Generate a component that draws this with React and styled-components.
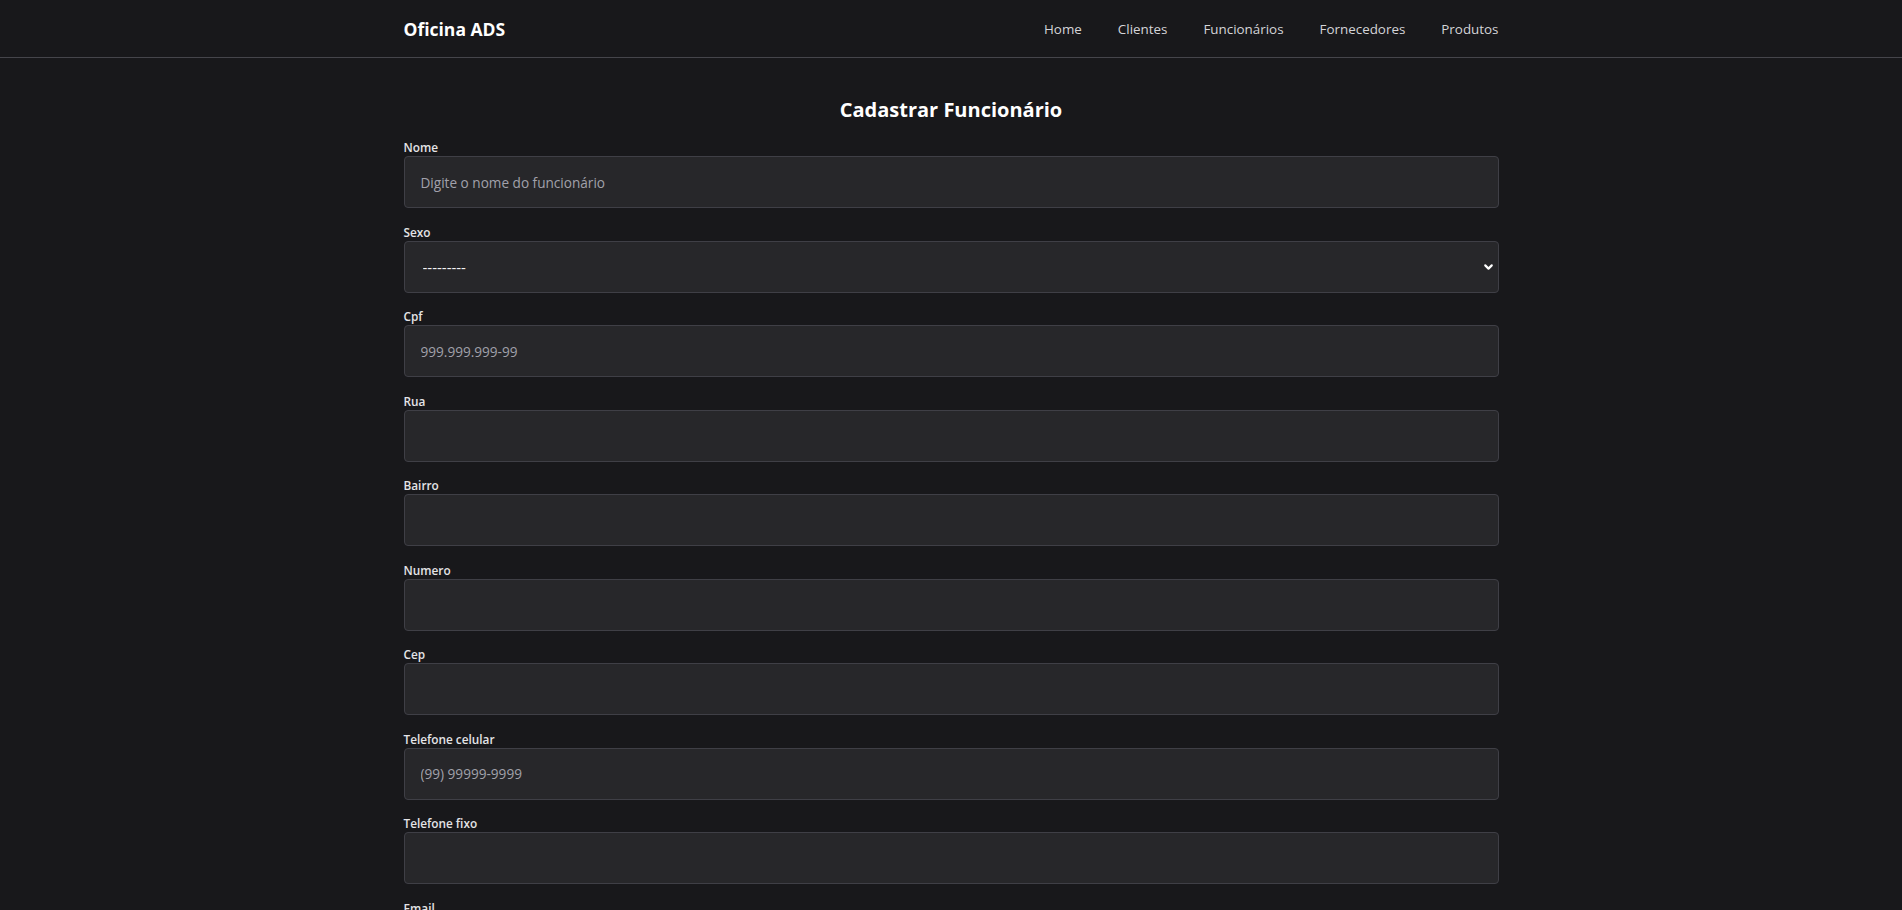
import React from 'react'
import styled, { createGlobalStyle } from 'styled-components'
import { ChevronDown } from 'lucide-react'

const GlobalStyle = createGlobalStyle`
    body {
        margin: 0;
        background: #18181b;
        color: #e4e4e7;
        font-family: "Open Sans", "Noto Sans", sans-serif;
    }
    * {
        box-sizing: border-box;
    }
`

const Header = styled.header`
    height: 58px;
    border-bottom: 1px solid #45454b;
    background: #18181b;
`

const Bar = styled.div`
    width: 1095px;
    height: 100%;
    margin: 0 auto;
    display: flex;
    align-items: center;
    justify-content: space-between;
`

const Logo = styled.a`
    color: #ffffff;
    font-size: 17.5px;
    font-weight: 700;
    text-decoration: none;
`

const Nav = styled.nav`
    display: flex;
    gap: 36px;
`

const NavLink = styled.a`
    color: #d4d4d8;
    font-size: 13.4px;
    text-decoration: none;
`

const Main = styled.main`
    width: 1095px;
    margin: 0 auto;
    padding: 38px 0 40px;
`

const Title = styled.h1`
    margin: 0 0 14px;
    text-align: center;
    color: #ffffff;
    font-size: 20px;
    line-height: 28px;
    font-weight: 700;
`

const Field = styled.div`
    margin-bottom: 14.5px;
`

const Label = styled.label`
    display: block;
    color: #e4e4e7;
    font-size: 11.8px;
    line-height: 18px;
    font-weight: 600;
`

const Input = styled.input`
    display: block;
    width: 100%;
    height: 52px;
    padding: 0 16px;
    background: #27272a;
    border: 1px solid #3f3f46;
    border-radius: 4px;
    color: #f4f4f5;
    font-family: inherit;
    font-size: 13.6px;
    outline: none;

    &::placeholder {
        color: #a1a1aa;
    }
`

const SelectWrap = styled.div`
    position: relative;
`

const Select = styled.select`
    display: block;
    width: 100%;
    height: 52px;
    padding: 0 16px 0 18px;
    appearance: none;
    background: #27272a;
    border: 1px solid #3f3f46;
    border-radius: 4px;
    color: #f4f4f5;
    font-family: inherit;
    font-size: 15px;
    outline: none;
`

const Arrow = styled.span`
    position: absolute;
    right: 4px;
    top: 50%;
    transform: translateY(-50%);
    display: flex;
    color: #ffffff;
    pointer-events: none;
`

const Button = styled.button`
    margin-top: 8px;
    padding: 12px 24px;
    background: #2563eb;
    border: none;
    border-radius: 4px;
    color: #ffffff;
    font-family: inherit;
    font-size: 14px;
    font-weight: 600;
`

const fields = [
    { label: 'Nome', placeholder: 'Digite o nome do funcionário' },
    { label: 'Sexo', select: true },
    { label: 'Cpf', placeholder: '999.999.999-99' },
    { label: 'Rua' },
    { label: 'Bairro' },
    { label: 'Numero' },
    { label: 'Cep' },
    { label: 'Telefone celular', placeholder: '(99) 99999-9999' },
    { label: 'Telefone fixo' },
    { label: 'Email' },
]

const App = () => (
    <>
        <GlobalStyle />
        <Header>
            <Bar>
                <Logo href="#">Oficina ADS</Logo>
                <Nav>
                    <NavLink href="#">Home</NavLink>
                    <NavLink href="#">Clientes</NavLink>
                    <NavLink href="#">Funcionários</NavLink>
                    <NavLink href="#">Fornecedores</NavLink>
                    <NavLink href="#">Produtos</NavLink>
                </Nav>
            </Bar>
        </Header>
        <Main>
            <Title>Cadastrar Funcionário</Title>
            <form>
                {fields.map((f) => (
                    <Field key={f.label}>
                        <Label>{f.label}</Label>
                        {f.select ? (
                            <SelectWrap>
                                <Select defaultValue="">
                                    <option value="">---------</option>
                                    <option value="M">Masculino</option>
                                    <option value="F">Feminino</option>
                                </Select>
                                <Arrow>
                                    <ChevronDown size={13} strokeWidth={4} />
                                </Arrow>
                            </SelectWrap>
                        ) : (
                            <Input placeholder={f.placeholder} />
                        )}
                    </Field>
                ))}
                <Button type="submit">Salvar</Button>
            </form>
        </Main>
    </>
)

export default App
